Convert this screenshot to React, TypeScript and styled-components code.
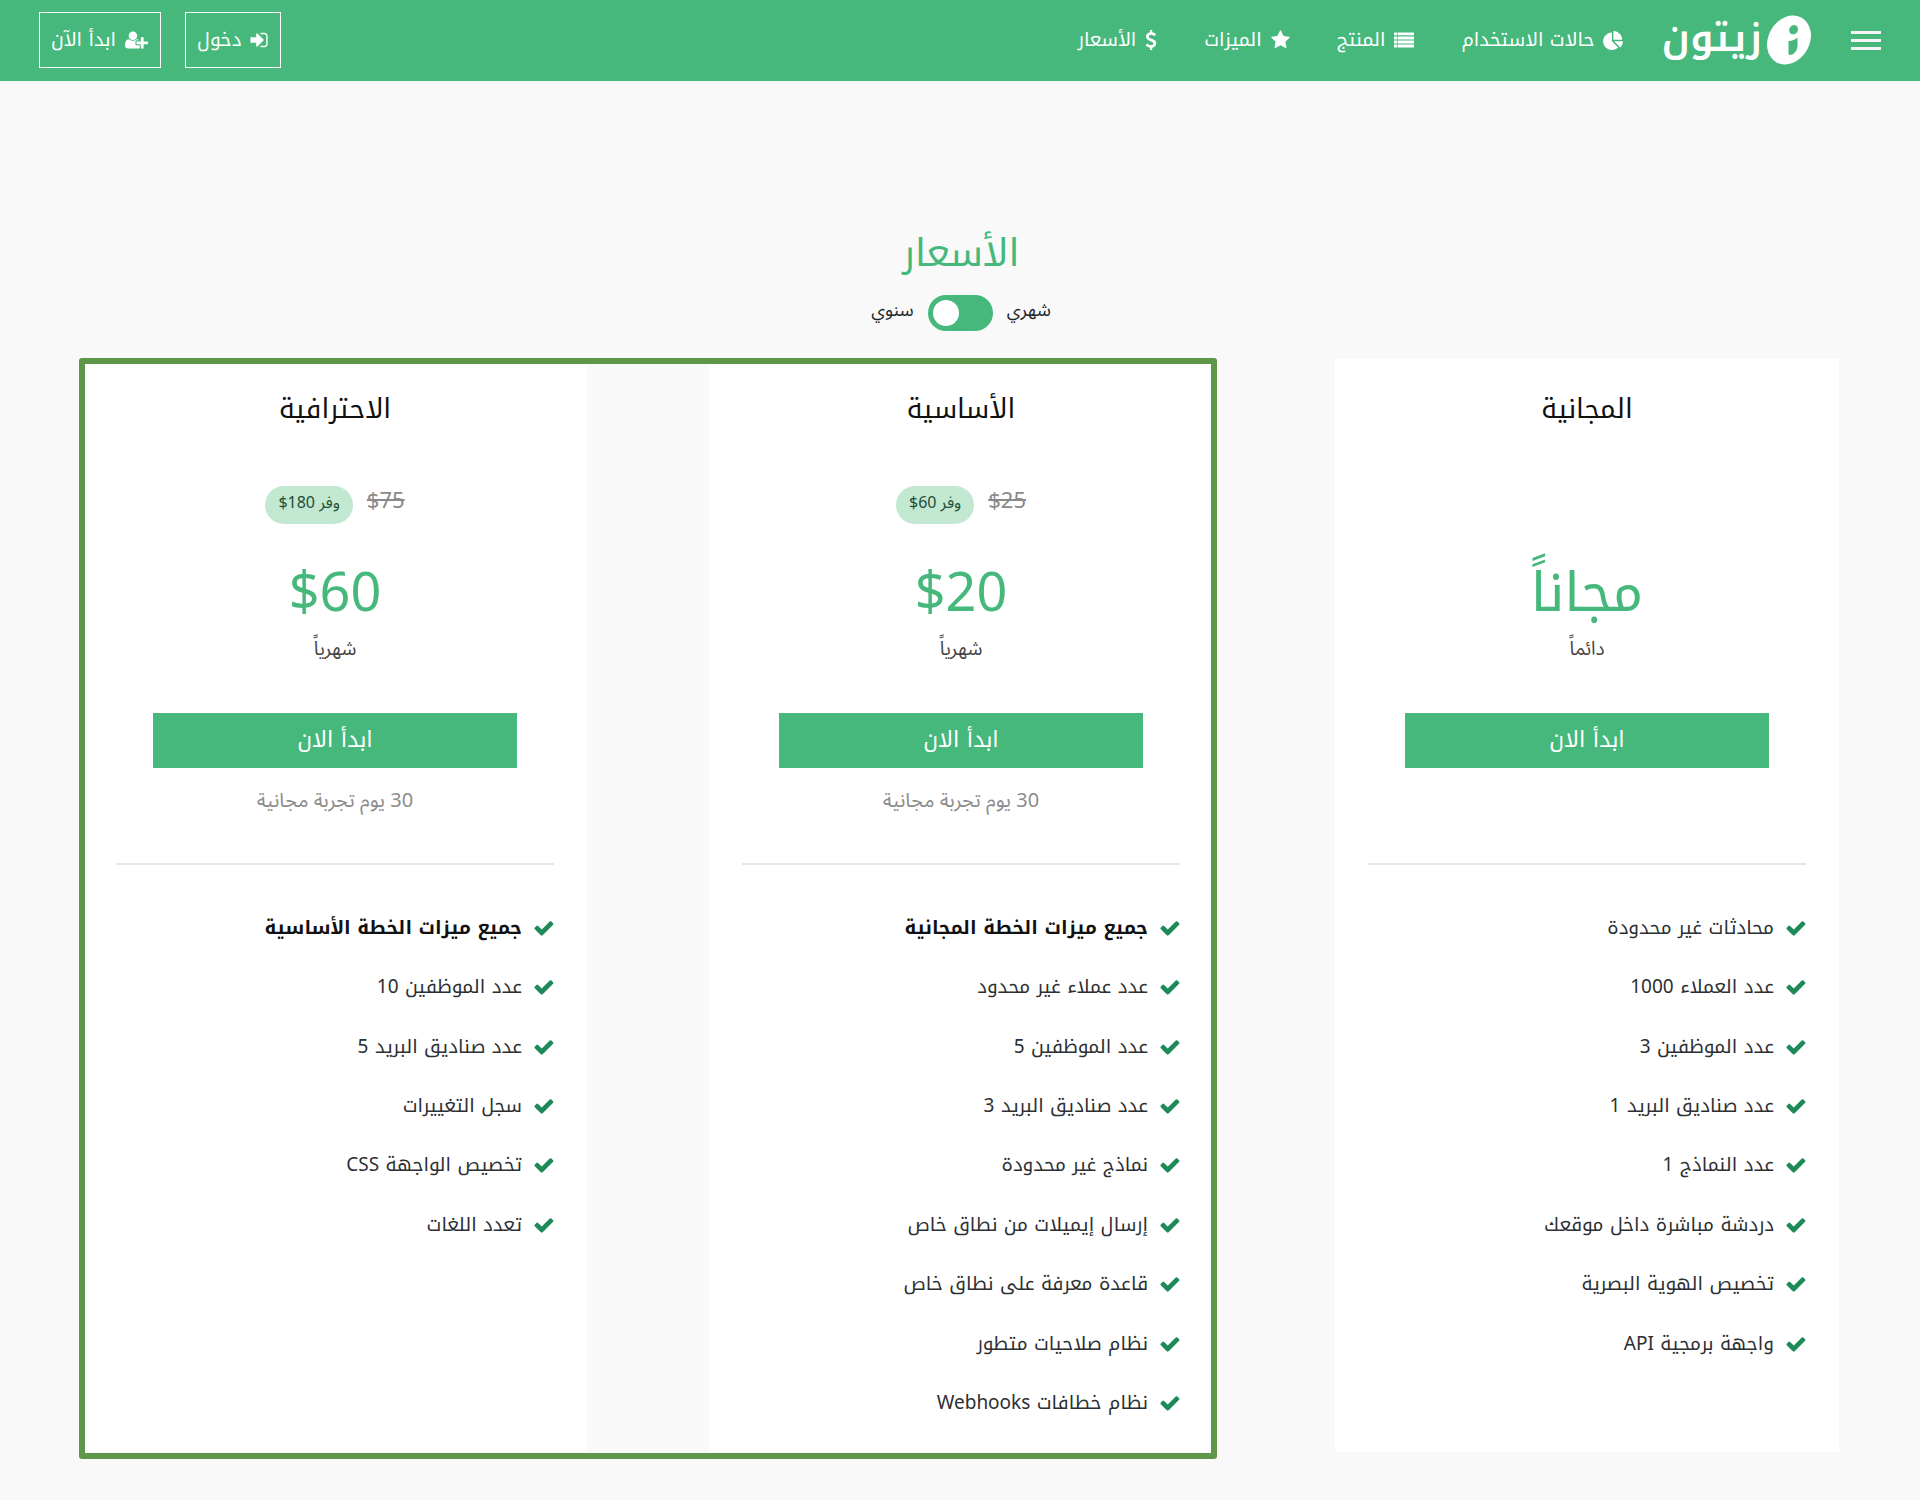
import React, { useState } from "react";
import styled, { createGlobalStyle } from "styled-components";

const green = "#46b87c";
const kufi = `"Noto Kufi Arabic", "Noto Sans", "Noto Sans Arabic", "DejaVu Sans", sans-serif`;
const naskh = `"Noto Sans", "Noto Sans Arabic", "Noto Naskh Arabic", "DejaVu Sans", sans-serif`;

const GlobalStyle = createGlobalStyle`
  *, *::before, *::after { box-sizing: border-box; }
  body { margin: 0; background: #f9f9f9; color: #212529; font-family: ${kufi}; font-size: 19px; }
  h1, h2, p, ul { margin: 0; padding: 0; font-weight: 400; }
  button { font-family: inherit; cursor: pointer; }
`;

const Page = styled.div`
  min-height: 100vh;
`;

const Header = styled.header`
  display: flex;
  align-items: center;
  height: 81px;
  padding: 0 39px 1px;
  background: ${green};
  color: #fff;
`;

const MenuButton = styled.button`
  display: grid;
  gap: 5px;
  width: 30px;
  padding: 0;
  border: 0;
  background: none;
  span { height: 3px; background: #f4f4f4; }
`;

const Logo = styled.a`
  display: flex;
  align-items: center;
  gap: 5px;
  margin-right: 40px;
  color: #fff;
  text-decoration: none;
`;

const Wordmark = styled.span`
  padding-bottom: 4px;
  font-size: 39px;
  line-height: 48px;
  font-weight: 600;
`;

const Nav = styled.nav`
  display: flex;
  gap: 47px;
  margin-right: 38px;
`;

const NavLink = styled.a`
  display: flex;
  align-items: center;
  gap: 9px;
  color: #fff;
  line-height: 32px;
  text-decoration: none;
`;

const Actions = styled.div`
  display: flex;
  gap: 24px;
  margin-right: auto;
`;

const OutlineLink = styled(NavLink)`
  height: 56px;
  padding: 0 12px 0 11px;
  border: 1px solid #fff;
`;

const Main = styled.main`
  padding: 136px 81px 40px 83px;
`;

const Heading = styled.h1`
  color: ${green};
  font-size: 38px;
  line-height: 72px;
  text-align: center;
`;

const Period = styled.div`
  display: flex;
  justify-content: center;
  align-items: center;
  gap: 14px;
  height: 48px;
  font-family: ${naskh};
  label { font-size: 18px; line-height: 26px; padding-bottom: 8px; }
`;

const Switch = styled.input`
  appearance: none;
  width: 65px;
  height: 36px;
  margin: 0;
  padding: 5px;
  border-radius: 18px;
  background: ${green};
  cursor: pointer;
  &::before {
    content: "";
    display: block;
    width: 26px;
    height: 26px;
    border-radius: 50%;
    background: #fff;
  }
  &:checked::before { margin-right: 29px; }
`;

const Plans = styled.div`
  display: grid;
  grid-template-columns: repeat(3, 1fr);
  column-gap: 122px;
  margin-top: 22px;
`;

const PaidPlans = styled.div`
  position: relative;
  grid-column: span 2;
  display: grid;
  grid-template-columns: subgrid;
  &::after {
    content: "";
    position: absolute;
    inset: -1px -4px -7px;
    border: 6px solid #5f974a;
    border-radius: 3px;
    pointer-events: none;
  }
`;

const Card = styled.section`
  display: flex;
  flex-direction: column;
  padding: 25px 33px 19px;
  background: #fff;
  text-align: center;
`;

const PlanName = styled.h2`
  color: #111;
  font-size: 27px;
  line-height: 50px;
`;

const Offer = styled.div`
  display: flex;
  justify-content: center;
  gap: 14px;
  height: 38px;
  margin-top: 52px;
  font-family: ${naskh};
  s { color: #8a8a8a; font-size: 22px; line-height: 26px; }
`;

const Saving = styled.span`
  padding: 0 13px;
  border-radius: 19px;
  background: #c2e8d2;
  color: #1f4d35;
  font-size: 16px;
  line-height: 32px;
`;

const Price = styled.p`
  margin-top: 30px;
  color: ${green};
  font-size: 54px;
  line-height: 78px;
`;

const Cycle = styled.p`
  color: #444;
  font-family: ${naskh};
  line-height: 32px;
`;

const StartButton = styled.button`
  height: 55px;
  margin: 49px 37px 0;
  padding: 0 0 2px;
  border: 0;
  background: ${green};
  color: #fff;
  font-size: 22px;
`;

const Trial = styled.p`
  height: 32px;
  margin-top: 16px;
  color: #8c8c8c;
  font-family: ${naskh};
  font-size: 20px;
  line-height: 32px;
`;

const Divider = styled.hr`
  width: 100%;
  height: 2px;
  margin: 47px 0 33px;
  border: 0;
  background: #e7e7e7;
`;

const Features = styled.ul`
  display: grid;
  grid-template-rows: repeat(9, 1fr);
  min-height: 535px;
  list-style: none;
`;

const Feature = styled.li<{ $strong?: boolean }>`
  display: flex;
  align-items: center;
  gap: 12px;
  color: ${(p) => (p.$strong ? "#111" : "#2c2f33")};
  line-height: 32px;
  font-weight: ${(p) => (p.$strong ? 700 : 400)};
  svg { color: #1e8a58; }
`;

const glyphs = {
  check: "M1671 566q0 40-28 68l-724 724-136 136q-28 28-68 28t-68-28l-136-136-362-362q-28-28-28-68t28-68l136-136q28-28 68-28t68 28l294 295 656-657q28-28 68-28t68 28l136 136q28 28 28 68z",
  pie: "M768 890l546 546q-106 108-247.500 168t-298.500 60q-209 0-385.500-103t-279.500-279.500-103-385.500 103-385.500 279.500-279.500 385.500-103v762zm187 6h773q0 157-60 298.500t-168 247.500zm709-128h-768v-768q209 0 385.500 103t279.500 279.500 103 385.500z",
  list: "M0 220h260v260H0zM320 220h1472v260H320zM0 580h260v260H0zM320 580h1472v260H320zM0 940h260v260H0zM320 940h1472v260H320zM0 1300h260v260H0zM320 1300h1472v260H320z",
  star: "M1728 647q0 22-26 48l-363 354 86 500q1 7 1 20 0 21-10.500 35.500t-30.500 14.500q-19 0-40-12l-449-236-449 236q-22 12-40 12-21 0-31.500-14.500t-10.500-35.500q0-6 2-20l86-500-364-354q-25-27-25-48 0-37 56-46l502-73 225-455q19-41 49-41t49 41l225 455 502 73q56 9 56 46z",
  dollar: "M1362 1185q0 153-99.500 263.500t-258.500 136.500v175q0 14-9 23t-23 9h-135q-13 0-22.500-9.500t-9.500-22.500v-175q-66-9-127.500-31t-101.500-44.500-74-48-46.500-37.500-17.500-18q-17-21-2-41l103-135q7-10 23-12 15-2 24 9l2 2q113 99 243 125 37 8 74 8 81 0 142.500-43t61.500-122q0-28-15-53t-33.500-42-58.500-37.500-66-32-80-32.500q-39-16-61.500-25t-61.500-26.500-62.500-31-56.500-35.500-53.500-42.500-43.500-49-35.500-58-21-66.500-8.500-78q0-138 98-242t255-134v-180q0-13 9.500-22.500t22.500-9.500h135q14 0 23 9t9 23v176q57 6 110.500 23t87 33.500 63.500 37.500 39 29 15 14q17 18 5 38l-81 146q-8 15-23 16-14 3-27-7-3-3-14.500-12t-39-26.500-58.500-32-74.500-26-85.500-11.500q-95 0-155 43t-60 111q0 26 8.500 48t29.500 41.500 39.500 33 56 31 60.500 27 70 27.500q53 20 81 31.500t76 35 75.500 42.500 62 50 53 63.500 31.500 76.500 13 94z",
  signIn: "M1312 896q0 26-19 45l-544 544q-19 19-45 19t-45-19-19-45v-288h-448q-26 0-45-19t-19-45v-384q0-26 19-45t45-19h448v-288q0-26 19-45t45-19 45 19l544 544q19 19 19 45zm352-352v704q0 119-84.500 203.500t-203.500 84.500h-320q-13 0-22.500-9.500t-9.500-22.500q0-4-1-20t-.5-26.500 3-23.500 10-19.500 20.500-6.500h320q66 0 113-47t47-113v-704q0-66-47-113t-113-47h-312l-11.500-1-11.500-3-8-5.500-7-9-2-13.500q0-4-1-20t-.5-26.500 3-23.500 10-19.500 20.500-6.500h320q119 0 203.500 84.500t84.500 203.500z",
  userPlus: "M704 896q-159 0-271.500-112.500t-112.500-271.500 112.500-271.500 271.500-112.500 271.500 112.500 112.500 271.500-112.500 271.500-271.500 112.500zm960 128h352q13 0 22.500 9.500t9.500 22.500v192q0 13-9.500 22.500t-22.500 9.500h-352v352q0 13-9.500 22.500t-22.500 9.500h-192q-13 0-22.500-9.500t-9.500-22.500v-352h-352q-13 0-22.500-9.500t-9.500-22.500v-192q0-13 9.500-22.500t22.500-9.500h352v-352q0-13 9.500-22.500t22.500-9.500h192q13 0 22.500 9.500t9.500 22.500v352zm-736 224q0 52 38 90t90 38h256v238q-68 50-171 50h-874q-121 0-194-69t-73-190q0-53 3.500-103.500t14-109 26.500-108.500 43-97.500 62-81 85.500-53.500 111.500-20q19 0 39 17 79 61 154.500 91.500t164.500 30.500 164.500-30.500 154.500-91.500q20-17 39-17 132 0 217 96h-223q-52 0-90 38t-38 90v192z",
};

type GlyphName = keyof typeof glyphs;

/* viewBox, drawn width, drawn height */
const boxes: Record<GlyphName, [string, number, number]> = {
  check: ["100 240 1600 1310", 20, 16],
  pie: ["0 0 1728 1664", 20, 19],
  list: ["0 0 1792 1792", 20, 20],
  star: ["64 0 1664 1792", 19, 20],
  dollar: ["384 0 1024 1792", 12, 20],
  signIn: ["110 0 1560 1792", 18, 20],
  userPlus: ["0 0 2048 1792", 23, 20],
};

const Icon = ({ name }: { name: GlyphName }) => {
  const [viewBox, width, height] = boxes[name];
  return (
    <svg viewBox={viewBox} width={width} height={height} fill="currentColor" aria-hidden="true">
      <path d={glyphs[name]} />
    </svg>
  );
};

const Mark = () => (
  <svg width="44" height="50" viewBox="0 0 44 50" aria-hidden="true">
    <ellipse cx="22" cy="25" rx="20.600" ry="25.600" fill="#fff" transform="rotate(30 22 25)" />
    <ellipse cx="26.600" cy="14.700" rx="4.300" ry="4.800" fill={green} transform="rotate(35 26.600 14.700)" />
    <path d="M21.500 26c3.800 0 6.800-1.300 9-3.800V30.500c0 5-3 8.800-7.500 9.400-1 .1-1.500-.4-1.500-1.400z" fill={green} />
  </svg>
);

const navItems: [string, GlyphName][] = [
  ["حالات الاستخدام", "pie"],
  ["المنتج", "list"],
  ["الميزات", "star"],
  ["الأسعار", "dollar"],
];

type Plan = {
  name: string;
  price: string;
  cycle: string;
  before?: string;
  saving?: string;
  trial?: string;
  inherits?: string;
  features: string[];
};

const freePlan: Plan = {
  name: "المجانية",
  price: "مجاناً",
  cycle: "دائماً",
  features: [
    "محادثات غير محدودة",
    "عدد العملاء 1000",
    "عدد الموظفين 3",
    "عدد صناديق البريد 1",
    "عدد النماذج 1",
    "دردشة مباشرة داخل موقعك",
    "تخصيص الهوية البصرية",
    "واجهة برمجية API",
  ],
};

const paidPlans: Plan[] = [
  {
    name: "الأساسية",
    price: "$20",
    cycle: "شهرياً",
    before: "$25",
    saving: "وفر 60$",
    trial: "30 يوم تجربة مجانية",
    inherits: "جميع ميزات الخطة المجانية",
    features: [
      "عدد عملاء غير محدود",
      "عدد الموظفين 5",
      "عدد صناديق البريد 3",
      "نماذج غير محدودة",
      "إرسال إيميلات من نطاق خاص",
      "قاعدة معرفة على نطاق خاص",
      "نظام صلاحيات متطور",
      "نظام خطافات Webhooks",
    ],
  },
  {
    name: "الاحترافية",
    price: "$60",
    cycle: "شهرياً",
    before: "$75",
    saving: "وفر 180$",
    trial: "30 يوم تجربة مجانية",
    inherits: "جميع ميزات الخطة الأساسية",
    features: ["عدد الموظفين 10", "عدد صناديق البريد 5", "سجل التغييرات", "تخصيص الواجهة CSS", "تعدد اللغات"],
  },
];

const PlanCard = ({ plan }: { plan: Plan }) => (
  <Card>
    <PlanName>{plan.name}</PlanName>
    <Offer>
      {plan.before && <s>{plan.before}</s>}
      {plan.saving && <Saving>{plan.saving}</Saving>}
    </Offer>
    <Price>{plan.price}</Price>
    <Cycle>{plan.cycle}</Cycle>
    <StartButton type="button">ابدأ الان</StartButton>
    <Trial>{plan.trial}</Trial>
    <Divider />
    <Features>
      {plan.inherits && (
        <Feature $strong>
          <Icon name="check" />
          {plan.inherits}
        </Feature>
      )}
      {plan.features.map((feature) => (
        <Feature key={feature}>
          <Icon name="check" />
          {feature}
        </Feature>
      ))}
    </Features>
  </Card>
);

export default function App() {
  const [yearly, setYearly] = useState(true);
  return (
    <Page dir="rtl" lang="ar">
      <GlobalStyle />
      <Header>
        <MenuButton type="button" aria-label="القائمة">
          <span />
          <span />
          <span />
        </MenuButton>
        <Logo href="#">
          <Mark />
          <Wordmark>زيتون</Wordmark>
        </Logo>
        <Nav>
          {navItems.map(([label, icon]) => (
            <NavLink key={label} href="#">
              <Icon name={icon} />
              {label}
            </NavLink>
          ))}
        </Nav>
        <Actions>
          <OutlineLink href="#">
            <Icon name="signIn" />
            دخول
          </OutlineLink>
          <OutlineLink href="#">
            <Icon name="userPlus" />
            ابدأ الآن
          </OutlineLink>
        </Actions>
      </Header>
      <Main>
        <Heading>الأسعار</Heading>
        <Period>
          <label htmlFor="period">شهري</label>
          <Switch
            id="period"
            type="checkbox"
            role="switch"
            checked={yearly}
            onChange={(e) => setYearly(e.target.checked)}
          />
          <label htmlFor="period">سنوي</label>
        </Period>
        <Plans>
          <PlanCard plan={freePlan} />
          <PaidPlans>
            {paidPlans.map((plan) => (
              <PlanCard key={plan.name} plan={plan} />
            ))}
          </PaidPlans>
        </Plans>
      </Main>
    </Page>
  );
}
